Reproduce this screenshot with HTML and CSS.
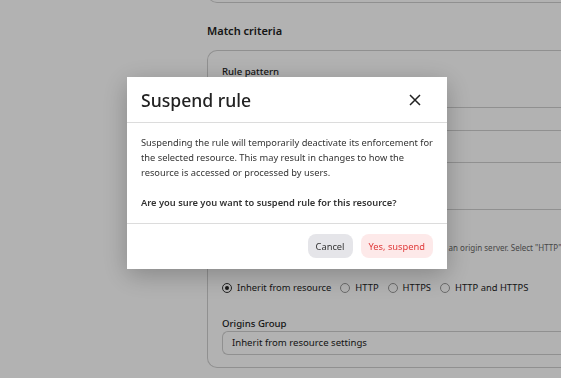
FILE: index.html
```html
<!DOCTYPE html>
<html lang="en">
<head>
  <meta charset="UTF-8">
  <meta name="viewport" content="width=device-width, initial-scale=1.0">
  <title>Suspend rule</title>
  <link rel="stylesheet" href="styles.css">
</head>
<body>
  <div class="page">
    <div class="card card-top"></div>
    <h2 class="section-title">Match criteria</h2>
    <div class="card">
      <label class="field-label">Rule pattern</label>
      <p class="hint">Specify the path or regular expression for the rule pattern.</p>
      <div class="input"></div>
      <div class="field-gap"></div>
      <div class="input tall"></div>
      <p class="hint hint-wide">Choose the protocol to be used for requesting content from an origin server. Select "HTTP" or "HTTPS".</p>
      <div class="radios">
        <label class="radio checked"><span class="dot"></span>Inherit from resource</label>
        <label class="radio"><span class="dot"></span>HTTP</label>
        <label class="radio"><span class="dot"></span>HTTPS</label>
        <label class="radio"><span class="dot"></span>HTTP and HTTPS</label>
      </div>
      <label class="field-label">Origins Group</label>
      <div class="input select">Inherit from resource settings</div>
    </div>
  </div>

  <div class="overlay">
    <div class="modal">
      <div class="modal-head">
        <h1>Suspend rule</h1>
        <button class="close" aria-label="Close">
          <svg width="12" height="12" viewBox="0 0 12 12"><path d="M1 1L11 11M11 1L1 11" stroke="#222" stroke-width="1.5" fill="none"/></svg>
        </button>
      </div>
      <div class="modal-body">
        <p>Suspending the rule will temporarily deactivate its enforcement for the selected resource. This may result in changes to how the resource is accessed or processed by users.</p>
        <p class="strong">Are you sure you want to suspend rule for this resource?</p>
      </div>
      <div class="modal-foot">
        <button class="btn btn-cancel">Cancel</button>
        <button class="btn btn-danger">Yes, suspend</button>
      </div>
    </div>
  </div>
</body>
</html>
```
FILE: styles.css
```css
* { box-sizing: border-box; }
body { margin: 0; font-family: "Noto Sans", "Open Sans", sans-serif; background: #fff; color: #222; overflow: hidden; height: 378px; }
.page { padding-left: 207px; overflow: hidden; }
.card { border: 1px solid #cfcfcf; border-right: none; border-radius: 10px 0 0 10px; padding: 14px 0 12px 14px; overflow: hidden; }
.card-top { height: 20px; margin-top: -17px; padding: 0; }
.section-title { font-size: 11px; font-weight: 600; margin: 20px 0 11px; line-height: 16px; }
.field-label { display: block; font-size: 9.6px; font-weight: 500; line-height: 14px; }
.hint { font-size: 8px; color: #666; margin: 4px 0 12px; line-height: 12px; white-space: nowrap; }
.input { height: 24px; border: 1px solid #cfcfcf; border-right: none; border-radius: 6px 0 0 6px; }
.field-gap { height: 31px; }
.input.tall { height: 48px; }
.hint-wide { margin: 32px 0 27px; }
.radios { display: flex; gap: 9px; font-size: 9.4px; line-height: 14px; margin-bottom: 22px; }
.radio { display: flex; align-items: center; gap: 5px; }
.dot { width: 10px; height: 10px; border: 1px solid #999; border-radius: 50%; position: relative; }
.radio.checked .dot { border-color: #333; }
.radio.checked .dot::after { content: ""; position: absolute; left: 2px; top: 2px; width: 4px; height: 4px; border-radius: 50%; background: #222; }
.select { font-size: 9.6px; line-height: 22px; padding-left: 9px; }

.overlay { position: fixed; inset: 0; background: rgba(0, 0, 0, 0.3); padding: 77px 0 0 127px; }
.modal { width: 320px; background: #fff; box-shadow: 0 6px 24px rgba(0, 0, 0, 0.25); }
.modal-head { display: flex; align-items: center; justify-content: space-between; height: 46px; padding: 0 26px 0 14px; border-bottom: 1px solid #dcdcdc; }
.modal-head h1 { margin: 0; font-size: 17.6px; font-weight: 500; }
.close { background: none; border: none; padding: 0; display: flex; cursor: pointer; }
.modal-body { padding: 12px 14px 13px; font-size: 9.3px; line-height: 15px; color: #333; border-bottom: 1px solid #dcdcdc; }
.modal-body p { margin: 0; }
.modal-body .strong { font-weight: 600; margin-top: 15px; }
.modal-foot { display: flex; justify-content: flex-end; gap: 8px; padding: 10px 14px 11px; }
.btn { font-family: inherit; font-size: 9.3px; height: 24px; border: none; border-radius: 8px; padding: 0 8px; cursor: pointer; }
.btn-cancel { background: #e5e5e9; color: #333; }
.btn-danger { background: #fde9e9; color: #e03b3b; }
```
